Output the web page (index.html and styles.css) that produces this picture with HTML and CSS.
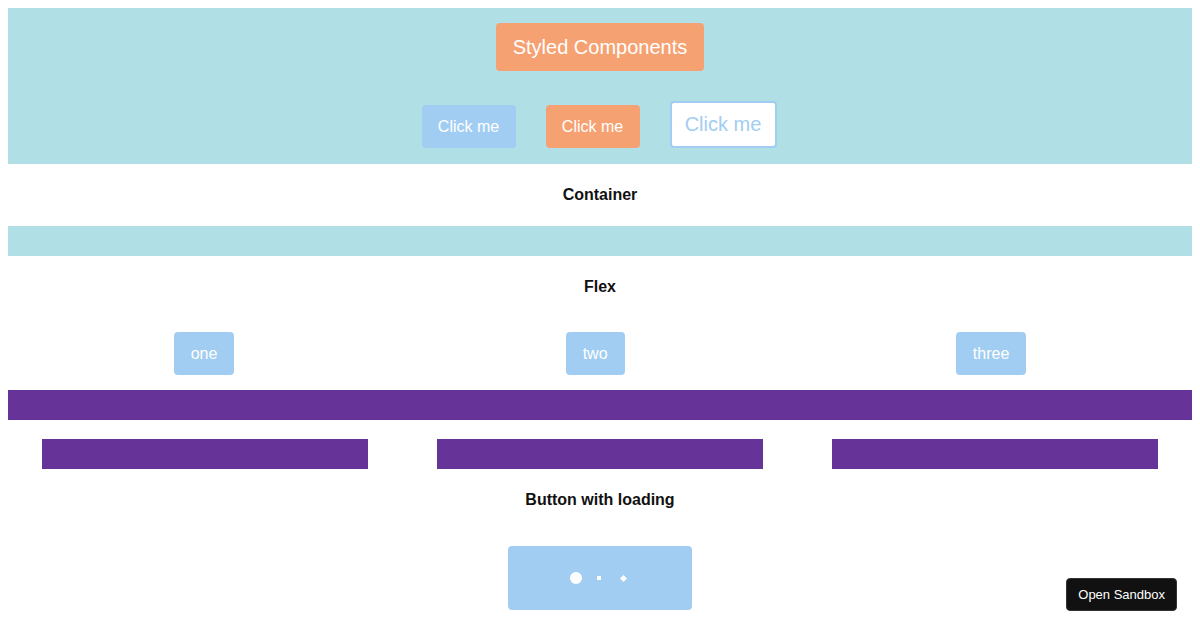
FILE: index.html
```html
<!DOCTYPE html>
<html lang="en">
<head>
    <meta charset="UTF-8">
    <title>Styled Components</title>
    <link rel="stylesheet" href="styles.css">
</head>
<body>
    <div class="hero">
        <button class="title-btn">Styled Components</button>
        <div class="btn-row">
            <button class="btn">Click me</button>
            <button class="btn btn-orange">Click me</button>
            <button class="btn btn-outline">Click me</button>
        </div>
    </div>

    <h3 class="heading heading-container">Container</h3>
    <div class="bar bar-blue"></div>

    <h3 class="heading">Flex</h3>
    <div class="flex-row">
        <span class="chip">one</span>
        <span class="chip">two</span>
        <span class="chip">three</span>
    </div>
    <div class="bar bar-purple"></div>
    <div class="flex-row bars">
        <div class="block"></div>
        <div class="block"></div>
        <div class="block"></div>
    </div>

    <h3 class="heading heading-loading">Button with loading</h3>
    <div class="loading-wrap">
        <button class="loading-btn">
            <span class="dot dot-big"></span>
            <span class="dot dot-small"></span>
            <span class="dot dot-diamond"></span>
        </button>
    </div>

    <button class="sandbox-btn">Open Sandbox</button>
</body>
</html>
```

FILE: styles.css
```css
body {
    margin: 8px;
    font-family: "Liberation Sans", Arial, sans-serif;
    background: #fff;
    color: #111;
}
button {
    font-family: inherit;
    cursor: pointer;
}

/* top block */
.hero {
    background: #b0dfe5;
    padding: 15px 0 16px;
    display: flex;
    flex-direction: column;
    align-items: center;
}
.title-btn {
    height: 48px;
    padding: 0 17px;
    font-size: 20px;
    color: #fff;
    background: #f6a172;
    border: none;
    border-radius: 4px;
}
.btn-row {
    margin-top: 30px;
    margin-right: 2px;
    display: flex;
    align-items: flex-end;
    gap: 30px;
}
.btn {
    width: 94px;
    height: 43px;
    padding: 0;
    font-size: 16px;
    color: #fff;
    background: #a2cdf2;
    border: none;
    border-radius: 4px;
}
.btn-orange {
    background: #f6a172;
}
.btn-outline {
    width: 107px;
    height: 47px;
    font-size: 20px;
    color: #a2cdf2;
    background: #fff;
    border: 2px solid #a2cdf2;
}

/* sections */
.heading {
    margin: 22px 0 0;
    font-size: 16px;
    line-height: 18px;
    font-weight: bold;
    text-align: center;
}
.heading-container {
    margin-bottom: 22px;
}
.bar {
    height: 30px;
}
.bar-blue {
    background: #b0dfe5;
}
.bar-purple {
    background: #663399;
    margin-top: 15px;
}

.flex-row {
    display: flex;
    justify-content: space-around;
    margin-top: 36px;
}
.chip {
    display: inline-flex;
    align-items: center;
    height: 43px;
    padding: 0 17px;
    font-size: 16px;
    color: #fff;
    background: #a2cdf2;
    border-radius: 4px;
}
.flex-row.bars {
    margin-top: 19px;
}
.block {
    width: 326px;
    height: 30px;
    background: #663399;
}

/* loading button */
.loading-wrap {
    display: flex;
    justify-content: center;
    margin-top: 37px;
}
.loading-btn {
    width: 184px;
    height: 64px;
    background: #a2cdf2;
    border: none;
    border-radius: 4px;
    display: flex;
    align-items: center;
    justify-content: center;
    padding: 0 4px 0 0;
}
.dot {
    display: block;
    background: #fff;
}
.dot-big {
    width: 12px;
    height: 12px;
    border-radius: 50%;
}
.dot-small {
    width: 4px;
    height: 4px;
    margin: 0 20px 0 15px;
}
.dot-diamond {
    width: 5px;
    height: 5px;
    transform: rotate(45deg);
}

/* floating button */
.sandbox-btn {
    position: fixed;
    right: 23px;
    bottom: 19px;
    height: 33px;
    padding: 0 11px;
    font-size: 13px;
    color: #fff;
    background: #111;
    border: 1px solid #333;
    border-radius: 4px;
}
```
